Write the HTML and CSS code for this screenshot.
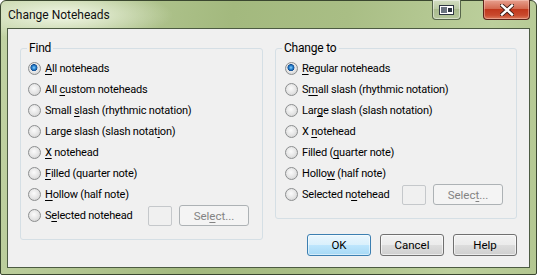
FILE: index.html
```html
<!DOCTYPE html>
<html lang="en">
<head>
	<title>Change Noteheads</title>
	<meta charset="UTF-8">
	<link rel="stylesheet" href="styles.css">
</head>
<body>
	<div class="window">
		<div class="titlebar">
			<span class="title">Change Noteheads</span>
			<div class="captions">
				<span class="cap cap-tool">
					<svg width="15" height="10" viewBox="0 0 15 10">
						<rect x="0.5" y="0.5" width="14" height="9" fill="#fff" stroke="#2d3640"/>
						<rect x="2" y="2" width="6" height="6" fill="#6a7480"/>
						<rect x="9" y="3" width="4" height="4" fill="#2d3640"/>
					</svg>
				</span>
				<span class="cap cap-close">
					<svg width="14" height="12" viewBox="0 0 14 12">
						<path d="M2 1.5 L12 10.5 M12 1.5 L2 10.5" stroke="#3a1a14" stroke-width="4.2" stroke-linecap="square"/>
						<path d="M2 1.5 L12 10.5 M12 1.5 L2 10.5" stroke="#fff" stroke-width="2.4" stroke-linecap="square"/>
					</svg>
				</span>
			</div>
		</div>
		<div class="client">
			<div class="group find">
				<span class="group-label">Find</span>
				<label class="row"><input type="radio" name="find" checked><span><u>A</u>ll noteheads</span></label>
				<label class="row"><input type="radio" name="find"><span>All <u>c</u>ustom noteheads</span></label>
				<label class="row"><input type="radio" name="find"><span>Small <u>s</u>lash (rhythmic notation)</span></label>
				<label class="row"><input type="radio" name="find"><span>Large slash (slash notat<u>i</u>on)</span></label>
				<label class="row"><input type="radio" name="find"><span><u>X</u> notehead</span></label>
				<label class="row"><input type="radio" name="find"><span><u>F</u>illed (quarter note)</span></label>
				<label class="row"><input type="radio" name="find"><span><u>H</u>ollow (half note)</span></label>
				<div class="row">
					<input type="radio" name="find"><span>S<u>e</u>lected notehead</span>
					<span class="swatch"></span>
					<button class="btn" disabled>Sel<u>e</u>ct...</button>
				</div>
			</div>
			<div class="side">
				<div class="group change">
					<span class="group-label">Change to</span>
					<label class="row"><input type="radio" name="change" checked><span><u>R</u>egular noteheads</span></label>
					<label class="row"><input type="radio" name="change"><span>S<u>m</u>all slash (rhythmic notation)</span></label>
					<label class="row"><input type="radio" name="change"><span>Lar<u>g</u>e slash (slash notation)</span></label>
					<label class="row"><input type="radio" name="change"><span>X <u>n</u>otehead</span></label>
					<label class="row"><input type="radio" name="change"><span>Filled (<u>q</u>uarter note)</span></label>
					<label class="row"><input type="radio" name="change"><span>Hollo<u>w</u> (half note)</span></label>
					<div class="row">
						<input type="radio" name="change"><span>Selected n<u>o</u>tehead</span>
						<span class="swatch"></span>
						<button class="btn" disabled>Selec<u>t</u>...</button>
					</div>
				</div>
				<div class="actions">
					<button class="btn btn-default">OK</button>
					<button class="btn">Cancel</button>
					<button class="btn">Help</button>
				</div>
			</div>
		</div>
	</div>
</body>
</html>
```

FILE: styles.css
```css
*{
	box-sizing: border-box;
}
body{
	margin: 0;
	font-family: Roboto, "Noto Sans", sans-serif;
	font-size: 11px;
	letter-spacing: -0.2px;
	color: #000;
}
.window{
	width: 537px;
	height: 275px;
	border: 1px solid #3a472f;
	border-radius: 6px 6px 2px 2px;
	padding: 0 6px 6px;
	display: flex;
	flex-direction: column;
	background:
		radial-gradient(ellipse 110px 26px at 62px 14px, rgba(245,250,235,0.95), rgba(245,250,235,0) 100%),
		linear-gradient(100deg, #c2d3a4 0%, #a3b97e 40%, #a9be85 60%, #bccf9c 85%, #b3c791 100%);
}
.titlebar{
	height: 27px;
	display: flex;
	justify-content: space-between;
	align-items: flex-start;
}
.title{
	padding: 6px 0 0 1px;
	font-size: 12px;
	letter-spacing: 0;
	line-height: 16px;
	color: #111;
}
.captions{
	display: flex;
	gap: 22px;
	margin-top: -1px;
}
.cap{
	height: 20px;
	display: flex;
	align-items: center;
	justify-content: center;
	border: 1px solid #56654a;
	border-top: none;
	border-radius: 0 0 4px 4px;
}
.cap-tool{
	width: 29px;
	background: linear-gradient(#d3dec2, #b9c9a2 50%, #a9bb8e 50%, #b6c79c);
	box-shadow: inset 0 0 0 1px rgba(255,255,255,0.45);
}
.cap-close{
	width: 47px;
	border-color: #5b231a;
	background: linear-gradient(#e7a08f, #d46a51 45%, #c1381d 50%, #c9492d 80%, #dc7b5c);
	box-shadow: inset 0 0 0 1px rgba(255,220,210,0.4);
}
.client{
	flex: 1;
	border: 1px solid #4c5b42;
	background-color: #f0f0f0;
	padding: 0 12px;
	display: flex;
	align-items: flex-start;
	gap: 12px;
}
.group{
	position: relative;
	margin-top: 19px;
	border: 1px solid #d5dfe5;
	border-radius: 3px;
	padding: 9px 13px 13px 7px;
}
.group-label{
	position: absolute;
	top: -9px;
	left: 6px;
	padding: 0 2px;
	font-size: 12px;
	line-height: 16px;
	background-color: #f0f0f0;
}
.find{
	width: 243px;
}
.side{
	flex: 1;
}
.change{
	padding-left: 9px;
}
.row{
	height: 21px;
	display: flex;
	align-items: center;
	white-space: nowrap;
}
.row input{
	appearance: none;
	-webkit-appearance: none;
	width: 13px;
	height: 13px;
	margin: 0 4px 0 0;
	border: 1px solid #8c8e8f;
	border-radius: 50%;
	background: radial-gradient(circle at 45% 40%, #fbfbfb 0, #e4e4e4 55%, #cacaca 100%);
	flex-shrink: 0;
}
.row input:checked{
	background:
		radial-gradient(circle at 45% 42%, #8fd2ff 0, #2a86d2 1.8px, #134d91 3.2px, rgba(19,77,145,0) 3.8px),
		radial-gradient(circle at 45% 40%, #fbfbfb 0, #e4e4e4 55%, #cacaca 100%);
}
.swatch{
	width: 24px;
	height: 20px;
	margin-left: auto;
	border: 1px solid #c5c8cb;
	border-radius: 2px;
	background-color: #f0f0f0;
}
.btn{
	height: 22px;
	font: inherit;
	font-size: 11.5px;
	padding: 0;
	border: 1px solid #707070;
	border-radius: 3px;
	background: linear-gradient(#f2f2f2, #ebebeb 50%, #dddddd 50%, #cfcfcf);
	color: #000;
	box-shadow: inset 0 0 0 1px rgba(255,255,255,0.6);
}
.row .btn{
	width: 70px;
	height: 21px;
	margin-left: 7px;
}
.btn:disabled{
	border-color: #adb2b5;
	background: #f4f4f4;
	color: #838383;
	box-shadow: none;
}
.btn-default{
	border-color: #3c7fb1;
	background: linear-gradient(#eaf6fd, #d9f0fc 50%, #bee6fd 50%, #a7d9f5);
	box-shadow: inset 0 0 0 1px rgba(255,255,255,0.5);
}
.actions{
	display: flex;
	justify-content: flex-end;
	gap: 9px;
	margin-top: 15px;
}
.actions .btn{
	width: 64px;
}
u{
	text-decoration-thickness: 1px;
	text-underline-offset: 2px;
}
```
